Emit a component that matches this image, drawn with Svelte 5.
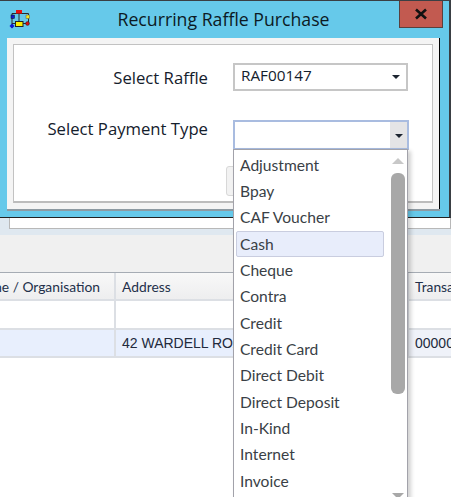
<script>
	let paymentTypes = [
		"Adjustment",
		"Bpay",
		"CAF Voucher",
		"Cash",
		"Cheque",
		"Contra",
		"Credit",
		"Credit Card",
		"Direct Debit",
		"Direct Deposit",
		"In-Kind",
		"Internet",
		"Invoice"
	];
	let hovered = "Cash";
</script>

<div class="page">
	<!-- grid behind the dialog -->
	<div class="band"><div class="band-box"></div></div>
	<div class="toolbar"></div>
	<div class="row head">
		<div class="cell name">me / Organisation</div>
		<div class="cell address">Address</div>
		<div class="cell trans">Transaction</div>
	</div>
	<div class="row blank">
		<div class="cell name"></div>
		<div class="cell address"></div>
		<div class="cell trans"></div>
	</div>
	<div class="row selected">
		<div class="cell name"></div>
		<div class="cell address">42 WARDELL ROAD</div>
		<div class="cell trans">00000123</div>
	</div>

	<div class="window">
		<div class="titlebar">
			<svg class="app-icon" width="22" height="22" viewBox="0 0 22 22">
				<path d="M3 4.5H19.5V14M3 4.5V19M10 4V12M3 14.5H6M14 14.5H18" fill="none" stroke="#2a2a2a" stroke-width="1" />
				<rect x="7" y="1" width="6" height="3.5" fill="#e81010" />
				<rect x="2" y="6" width="3.5" height="3.5" fill="#1018d0" stroke="#111" stroke-width=".5" />
				<rect x="17" y="6" width="3.5" height="3.5" fill="#f4e820" stroke="#555" stroke-width=".5" />
				<rect x="6.5" y="12.5" width="7.5" height="5" fill="#fbf000" stroke="#222" />
				<path d="M3 14.5L5.5 17L3 19.5L.5 17Z" fill="#1018d0" />
				<circle cx="18.5" cy="14.5" r="1.9" fill="#d81010" stroke="#222" stroke-width=".5" />
			</svg>
			<div class="title">Recurring Raffle Purchase</div>
			<button class="close" aria-label="Close">
				<svg width="14" height="12" viewBox="0 0 14 12">
					<path d="M2 1.5L12 10.5M12 1.5L2 10.5" stroke="#111" stroke-width="2.6" fill="none" />
				</svg>
			</button>
		</div>
		<div class="pane">
			<div class="form">
				<div class="field first">
					<div class="label">Select Raffle</div>
					<div class="select">
						<span>RAF00147</span>
						<span class="arrow"></span>
					</div>
				</div>
				<div class="field second">
					<div class="label">Select Payment Type</div>
					<div class="select open">
						<span></span>
						<div class="drop-btn"><span class="arrow"></span></div>
					</div>
				</div>
				<div class="ok-btn"></div>
			</div>
		</div>
	</div>

	<div class="dropdown">
		<div class="list">
			{#each paymentTypes as type}
				<div class="item" class:hover={type === hovered}>{type}</div>
			{/each}
		</div>
		<div class="scrollbar">
			<span class="up"></span>
			<div class="thumb"></div>
			<span class="down"></span>
		</div>
	</div>
</div>

<style>
	:global(body) {
		margin: 0;
		background: #fff;
	}

	.page {
		position: relative;
		width: 451px;
		height: 497px;
		overflow: hidden;
		background: #fff;
	}

	.band {
		height: 235px;
		background: #dfe8f0;
		box-sizing: border-box;
		padding: 200px 0 6px 9px;
	}
	.band-box {
		height: 100%;
		background: #fff;
		border: 1px solid #b8b8b8;
		box-sizing: border-box;
	}
	.toolbar {
		height: 37px;
		background: #f0f0f0;
	}

	.row {
		display: grid;
		grid-template-columns: 116px 293px 42px;
		border-bottom: 2px solid #dcdfe4;
		box-sizing: border-box;
	}
	.cell {
		overflow: hidden;
		white-space: nowrap;
		display: flex;
		align-items: center;
		box-sizing: border-box;
		border-right: 2px solid #dcdfe4;
	}
	.cell.address,
	.cell.trans {
		padding-left: 6px;
	}

	.cell.trans {
		border-right: 0;
	}

	.head {
		height: 29px;
		border-top: 1px solid #a6acb4;
		background: linear-gradient(#f8f8f8, #eeeeef);
		font: 13.8px Lato, "Liberation Sans", sans-serif;
		color: #23304a;
	}
	.head .name {
		justify-content: flex-end;
		padding-right: 14px;
	}
	.blank {
		height: 29px;
	}
	.selected {
		height: 28px;
		background: #e8effd;
		font: 14px "Liberation Sans", Arial, sans-serif;
		color: #222a3c;
	}
	.selected .trans {
		background: #eff2f9;
	}

	.window {
		position: absolute;
		top: 0;
		left: 0;
		width: 451px;
		height: 218px;
		box-sizing: border-box;
		background: #66c9ea;
		border-top: 1px solid #3a3f44;
		border-right: 2px solid #3a3f44;
		border-bottom: 1px solid #222;
		padding: 0 9px 8px 7px;
		display: flex;
		flex-direction: column;
	}
	.titlebar {
		height: 37px;
		display: flex;
		align-items: flex-start;
		position: relative;
		flex: none;
	}
	.app-icon {
		position: absolute;
		left: 2px;
		top: 8px;
	}
	.title {
		width: 100%;
		text-align: center;
		padding-top: 6px;
		font: 17.7px "Open Sans", "Noto Sans", sans-serif;
		color: #0c1a24;
	}
	.close {
		position: absolute;
		right: -3px;
		top: 0;
		width: 44px;
		height: 27px;
		padding: 0;
		background: #c25a50;
		border: 1px solid #59403e;
		border-top: 0;
		display: flex;
		align-items: center;
		justify-content: center;
	}
	.pane {
		flex: 1;
		background: #f4f4f4;
		border-right: 1px solid #000;
		padding: 6px 6px 6px 6px;
		box-shadow: 0 2px 0 #8d9aa2;
		display: flex;
	}
	.form {
		position: relative;
		flex: 1;
		background: #fff;
		border: 1px solid #c2c2c2;
		border-bottom: 2px solid #bcbcbc;
		box-sizing: border-box;
	}

	.field {
		display: flex;
		align-items: center;
		height: 28px;
	}
	.field.first {
		margin-top: 18px;
	}
	.field.second {
		margin-top: 29px;
		height: 30px;
		align-items: flex-start;
	}
	.label {
		width: 194px;
		text-align: right;
		font: 16.7px "Open Sans", "Noto Sans", sans-serif;
		color: #14202c;
	}
	.first .label {
		margin-top: 1px;
	}
	.second .label {
		margin-top: -3px;
	}
	.select {
		margin-left: 25px;
		width: 175px;
		height: 28px;
		box-sizing: border-box;
		border: 2px solid #c6c6c6;
		display: flex;
		align-items: center;
		justify-content: space-between;
		padding: 0 6px 5px 6px;
		font: 15.3px "Open Sans", "Noto Sans", sans-serif;
		color: #14202c;
	}
	.select.open {
		width: 176px;
		height: 30px;
		border-color: #a9bce0;
		padding: 0;
		align-items: stretch;
	}
	.drop-btn {
		width: 17px;
		background: #e4e4e6;
		display: flex;
		align-items: center;
		justify-content: center;
	}
	.arrow {
		width: 0;
		height: 0;
		border-left: 4px solid transparent;
		border-right: 4px solid transparent;
		border-top: 4px solid #1c2430;
		margin-top: 4px;
	}
	.drop-btn .arrow {
		margin-top: 2px;
	}
	.ok-btn {
		position: absolute;
		left: 212px;
		top: 121px;
		width: 40px;
		height: 28px;
		background: #f2f2f2;
		border: 1px solid #d8d8d8;
		border-radius: 3px;
	}

	.dropdown {
		position: absolute;
		left: 233px;
		top: 149px;
		width: 175px;
		height: 352px;
		box-sizing: border-box;
		background: #fff;
		border: 1px solid #a2a2aa;
		box-shadow: 3px 2px 4px rgba(0, 0, 0, 0.18);
		display: flex;
		padding: 2px 3px 0 2px;
	}
	.list {
		width: 148px;
		flex: none;
	}
	.item {
		height: 26.35px;
		box-sizing: border-box;
		padding: 0 0 1px 3px;
		display: flex;
		align-items: center;
		font: 15.6px Lato, "Open Sans", sans-serif;
		color: #3a3f46;
		border: 1px solid transparent;
	}
	.item.hover {
		background: #e8edfb;
		border-color: #c9cddf;
		border-radius: 2px;
	}
	.scrollbar {
		margin-left: 7px;
		width: 14px;
		display: flex;
		flex-direction: column;
		align-items: center;
		padding-top: 6px;
	}
	.thumb {
		width: 14px;
		height: 221px;
		margin-top: 9px;
		border-radius: 6px;
		background: #a8a8a8;
	}
	.up {
		width: 0;
		height: 0;
		border-left: 6px solid transparent;
		border-right: 6px solid transparent;
		border-bottom: 6px solid #c8c8c8;
	}
	.down {
		width: 0;
		height: 0;
		margin-top: 99px;
		border-left: 6px solid transparent;
		border-right: 6px solid transparent;
		border-top: 6px solid #a8a8a8;
	}
</style>
